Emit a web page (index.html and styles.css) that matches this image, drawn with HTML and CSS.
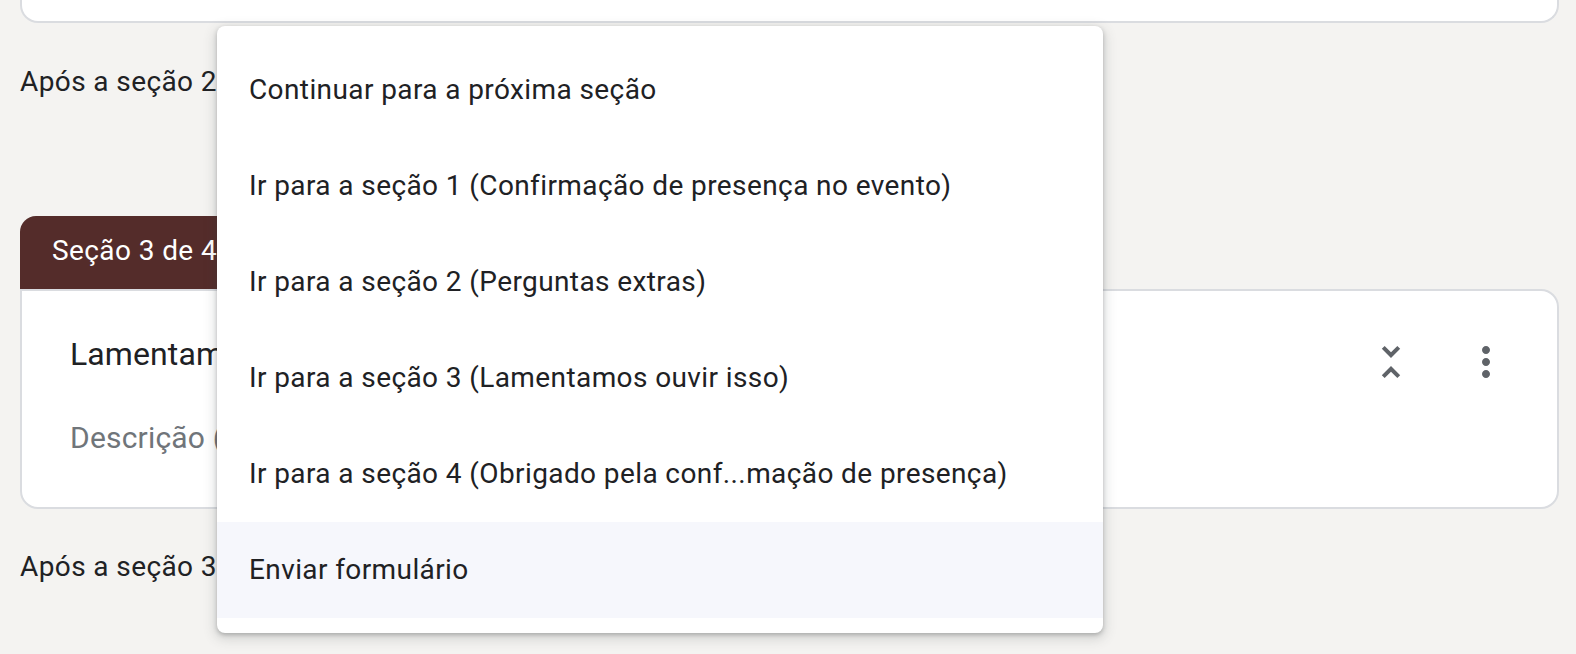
FILE: index.html
```html
<!DOCTYPE html>
<html lang="pt">
<head>
<meta charset="utf-8">
<title>Seções</title>
<link rel="stylesheet" href="styles.css">
</head>
<body>
<div class="page">
  <div class="prev-card"></div>

  <div class="after-row">Após a seção 2</div>

  <section class="section">
    <div class="section-tab">Seção 3 de 4</div>
    <div class="section-card">
      <div class="card-head">
        <div class="card-title">Lamentamos ouvir isso</div>
        <div class="card-actions">
          <button class="icon-btn" aria-label="Recolher seção">
            <svg viewBox="0 0 24 24" width="48" height="48"><path d="M7.41 18.59L8.83 20 12 16.83 15.17 20l1.41-1.41L12 14l-4.59 4.59zm9.18-13.18L15.17 4 12 7.17 8.83 4 7.41 5.41 12 10l4.59-4.59z"/></svg>
          </button>
          <button class="icon-btn" aria-label="Mais opções">
            <svg viewBox="0 0 24 24" width="48" height="48"><path d="M12 8c1.1 0 2-.9 2-2s-.9-2-2-2-2 .9-2 2 .9 2 2 2zm0 2c-1.1 0-2 .9-2 2s.9 2 2 2 2-.9 2-2-.9-2-2-2zm0 6c-1.1 0-2 .9-2 2s.9 2 2 2 2-.9 2-2-.9-2-2-2z"/></svg>
          </button>
        </div>
      </div>
      <div class="card-desc">Descrição (opcional)</div>
    </div>
  </section>

  <div class="after-row after-row-3">Após a seção 3</div>
</div>

<ul class="menu" role="listbox">
  <li class="menu-item">Continuar para a próxima seção</li>
  <li class="menu-item">Ir para a seção 1 (Confirmação de presença no evento)</li>
  <li class="menu-item">Ir para a seção 2 (Perguntas extras)</li>
  <li class="menu-item">Ir para a seção 3 (Lamentamos ouvir isso)</li>
  <li class="menu-item">Ir para a seção 4 (Obrigado pela conf...mação de presença)</li>
  <li class="menu-item is-hover">Enviar formulário</li>
</ul>
</body>
</html>
```

FILE: styles.css
```css
* { box-sizing: border-box; }

html, body {
  margin: 0;
  padding: 0;
  background: #f4f3f1;
  font-family: Roboto, "Liberation Sans", Arial, sans-serif;
  color: #202124;
  height: 654px;
  overflow: hidden;
}

.page {
  width: 1539px;
  margin-left: 20px;
}

.prev-card {
  height: 23px;
  background: #fff;
  border: 2px solid #dadce0;
  border-top: none;
  border-radius: 0 0 18px 18px;
}

.after-row {
  margin-top: 39px;
  height: 40px;
  line-height: 40px;
  font-size: 28px;
  letter-spacing: 0.4px;
}

.section {
  margin-top: 114px;
}

.section-tab {
  display: inline-block;
  height: 73px;
  line-height: 70px;
  padding: 0 32px;
  background: #542c2a;
  color: #fff;
  font-size: 28px;
  letter-spacing: 0.4px;
  border-radius: 16px 16px 0 0;
  vertical-align: bottom;
}

.section-card {
  display: block;
  background: #fff;
  border: 2px solid #dadce0;
  border-radius: 0 18px 18px 18px;
  height: 220px;
  padding: 43px 47px 0 48px;
}

.card-head {
  display: flex;
  align-items: flex-start;
  justify-content: space-between;
}

.card-title {
  font-size: 32px;
  line-height: 40px;
  letter-spacing: 0.1px;
  color: #202124;
}

.card-actions {
  display: flex;
  gap: 47px;
  margin-top: 4px;
}

.icon-btn {
  width: 48px;
  height: 48px;
  padding: 0;
  border: none;
  background: none;
  display: flex;
  align-items: center;
  justify-content: center;
}

.icon-btn svg { fill: #5f6368; display: block; }

.card-desc {
  margin-top: 32px;
  font-size: 30px;
  line-height: 40px;
  color: #70757a;
  letter-spacing: 0.2px;
}

.after-row-3 {
  margin-top: 38px;
}

.menu {
  position: absolute;
  left: 217px;
  top: 26px;
  width: 886px;
  height: 607px;
  margin: 0;
  padding: 16px 0 15px;
  list-style: none;
  background: #fff;
  border-radius: 8px;
  box-shadow: 0 2px 4px rgba(60, 64, 67, 0.3), 0 4px 12px 3px rgba(60, 64, 67, 0.15);
}

.menu-item {
  height: 96px;
  line-height: 96px;
  padding: 0 32px;
  font-size: 28px;
  letter-spacing: 0.4px;
  color: #202124;
  white-space: nowrap;
}

.menu-item.is-hover {
  background: #f6f7fc;
}
```
